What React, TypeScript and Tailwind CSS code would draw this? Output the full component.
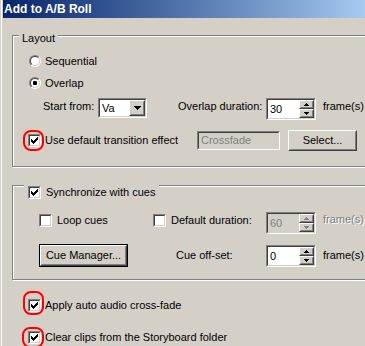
import React from "react";

type P = { className?: string; innerClassName?: string; children?: React.ReactNode };

function Sunken({ className = "", innerClassName = "", children }: P) {
  return (
    <div className={"border border-t-[#808080] border-l-[#808080] border-b-white border-r-white " + className}>
      <div className={"w-full h-full border border-t-[#404040] border-l-[#404040] border-b-[#D4D0C8] border-r-[#D4D0C8] " + innerClassName}>
        {children}
      </div>
    </div>
  );
}

function Raised({ className = "", innerClassName = "", children }: P) {
  return (
    <div className={"border border-t-white border-l-white border-b-[#404040] border-r-[#404040] bg-[#D4D0C8] " + className}>
      <div className={"w-full h-full border border-t-[#D4D0C8] border-l-[#D4D0C8] border-b-[#808080] border-r-[#808080] " + innerClassName}>
        {children}
      </div>
    </div>
  );
}

function Check() {
  return (
    <svg width="7" height="7" viewBox="0 0 7 7" shapeRendering="crispEdges">
      <path
        fill="#000"
        d="M6 0h1v1h-1z M5 1h2v1h-2z M0 2h1v1h-1z M4 2h3v1h-3z M0 3h2v1h-2z M3 3h3v1h-3z M0 4h5v1h-5z M1 5h3v1h-3z M2 6h1v1h-1z"
      />
    </svg>
  );
}

function CheckBox({ checked }: { checked?: boolean }) {
  return (
    <Sunken className="w-[13px] h-[13px] shrink-0" innerClassName="bg-white flex items-center justify-center">
      {checked ? <Check /> : null}
    </Sunken>
  );
}

function Radio({ checked }: { checked?: boolean }) {
  return (
    <span className="w-[12px] h-[12px] shrink-0 rounded-full border border-t-[#808080] border-l-[#808080] border-b-white border-r-white flex">
      <span className="w-full h-full rounded-full border border-t-[#404040] border-l-[#404040] border-b-[#D4D0C8] border-r-[#D4D0C8] bg-white flex items-center justify-center">
        {checked ? <span className="w-[4px] h-[4px] rounded-[1px] bg-black" /> : null}
      </span>
    </span>
  );
}

function Arrow({ up, disabled }: { up?: boolean; disabled?: boolean }) {
  const c = disabled ? "#808080" : "#000";
  return (
    <svg width="5" height="3" viewBox="0 0 5 3" shapeRendering="crispEdges">
      {up ? (
        <path fill={c} d="M2 0h1v1h-1z M1 1h3v1h-3z M0 2h5v1h-5z" />
      ) : (
        <path fill={c} d="M0 0h5v1h-5z M1 1h3v1h-3z M2 2h1v1h-1z" />
      )}
    </svg>
  );
}

function Spin({ value, disabled }: { value: string; disabled?: boolean }) {
  return (
    <Sunken className="w-[50px] h-[22px] shrink-0" innerClassName={"flex " + (disabled ? "bg-[#D4D0C8]" : "bg-white")}>
      <div className={"flex-1 pl-[2px] leading-[18px] " + (disabled ? "text-[#808080]" : "text-black")}>{value}</div>
      <div className="w-[15px] flex flex-col">
        <Raised className="h-[9px]" innerClassName="flex items-center justify-center">
          <Arrow up disabled={disabled} />
        </Raised>
        <Raised className="h-[9px]" innerClassName="flex items-center justify-center">
          <Arrow disabled={disabled} />
        </Raised>
      </div>
    </Sunken>
  );
}

function RedRing({ className }: { className: string }) {
  return <span className={"absolute border-2 border-[#FF0000] rounded-[8px] pointer-events-none " + className} />;
}

export default function App() {
  return (
    <div className="w-[365px] h-[346px] overflow-hidden bg-[#D4D0C8] flex font-['Liberation_Sans',Arial,sans-serif] text-[11px] text-black leading-[13px]">
      <div className="w-[1px] shrink-0 bg-[#D4D0C8]" />
      <div className="w-[1px] shrink-0 bg-white" />
      <div className="w-[1px] shrink-0 bg-[#D4D0C8]" />
      <div className="flex-1 flex flex-col min-w-0">
        {/* Title bar */}
        <div className="h-[18px] shrink-0 bg-gradient-to-r from-[#0A246A] to-[#A6CAF0] text-white font-bold text-[12px] leading-[18px] pl-[1px] whitespace-nowrap">
          Add to A/B Roll
        </div>

        {/* Layout group */}
        <div className="relative mt-[17px] ml-[9px] w-[380px] shrink-0 border border-[#808080] shadow-[inset_1px_1px_0_#fff,1px_1px_0_#fff] pt-[18px] pb-[15px]">
          <span className="absolute left-[6px] -top-[4px] px-[3px] bg-[#D4D0C8]">Layout</span>

          <div className="h-[14px] flex items-center pl-[16px] gap-[4px]">
            <Radio />
            <span>Sequential</span>
          </div>
          <div className="mt-[8px] h-[14px] flex items-center pl-[16px] gap-[4px]">
            <Radio checked />
            <span>Overlap</span>
          </div>
          <div className="mt-[8px] h-[22px] flex items-start pl-[30px]">
            <span className="w-[55px] leading-[17px]">Start from:</span>
            <Sunken className="w-[49px] h-[20px] shrink-0" innerClassName="bg-white flex items-center">
              <span className="flex-1 pl-[2px]">Va</span>
              <Raised className="w-[16px] h-[16px]" innerClassName="flex items-center justify-center">
                <svg width="7" height="4" viewBox="0 0 7 4" shapeRendering="crispEdges">
                  <path fill="#000" d="M0 0h7v1h-7z M1 1h5v1h-5z M2 2h3v1h-3z M3 3h1v1h-1z" />
                </svg>
              </Raised>
            </Sunken>
            <span className="ml-[31px] w-[88px] leading-[17px] whitespace-nowrap">Overlap duration:</span>
            <Spin value="30" />
            <span className="ml-[7px] leading-[17px]">frame(s)</span>
          </div>
          <div className="mt-[10px] h-[21px] flex items-center pl-[15px]">
            <div className="w-[169px] flex items-center gap-[4px]">
              <span className="relative">
                <CheckBox checked />
                <RedRing className="-left-[5px] -top-[4px] w-[21px] h-[21px]" />
              </span>
              <span className="whitespace-nowrap">Use default transition effect</span>
            </div>
            <Sunken className="w-[83px] h-[19px]" innerClassName="bg-[#D4D0C8] flex items-center">
              <span className="pl-[2px] text-[#808080]">Crossfade</span>
            </Sunken>
            <Raised className="ml-[8px] w-[69px] h-[21px]" innerClassName="flex items-center justify-center">
              Select...
            </Raised>
          </div>
        </div>

        {/* Synchronize group */}
        <div className="relative mt-[18px] ml-[9px] w-[380px] shrink-0 border border-[#808080] shadow-[inset_1px_1px_0_#fff,1px_1px_0_#fff] pt-[26px] pb-[12px]">
          <div className="absolute left-[11px] -top-[1px] h-[15px] px-[4px] bg-[#D4D0C8] flex items-center gap-[5px]">
            <CheckBox checked />
            <span className="whitespace-nowrap">Synchronize with cues</span>
          </div>

          <div className="h-[22px] flex items-start pl-[26px]">
            <div className="w-[114px] flex items-start gap-[5px]">
              <span className="mt-[2px]">
                <CheckBox />
              </span>
              <span className="leading-[17px]">Loop cues</span>
            </div>
            <div className="w-[113px] flex items-start gap-[5px]">
              <span className="mt-[2px]">
                <CheckBox />
              </span>
              <span className="leading-[17px] whitespace-nowrap">Default duration:</span>
            </div>
            <Spin value="60" disabled />
            <span className="ml-[7px] leading-[15px] text-[#808080] [text-shadow:1px_1px_0_#fff]">frame(s)</span>
          </div>

          <div className="mt-[10px] h-[23px] flex items-center pl-[26px]">
            <div className="w-[89px] h-[23px] border border-black">
              <Raised className="w-full h-full" innerClassName="flex items-center justify-center">
                Cue Manager...
              </Raised>
            </div>
            <span className="ml-[48px] w-[90px]">Cue off-set:</span>
            <Spin value="0" />
            <span className="ml-[7px]">frame(s)</span>
          </div>
        </div>

        {/* Bottom options */}
        <div className="mt-[19px] h-[13px] flex items-center pl-[25px] gap-[4px]">
          <span className="relative">
            <CheckBox checked />
            <RedRing className="-left-[5px] -top-[8px] w-[21px] h-[24px]" />
          </span>
          <span className="whitespace-nowrap">Apply auto audio cross-fade</span>
        </div>
        <div className="mt-[19px] h-[13px] flex items-center pl-[25px] gap-[4px]">
          <span className="relative">
            <CheckBox checked />
            <RedRing className="-left-[6px] -top-[4px] w-[22px] h-[21px]" />
          </span>
          <span className="whitespace-nowrap">Clear clips from the Storyboard folder</span>
        </div>
      </div>
    </div>
  );
}
